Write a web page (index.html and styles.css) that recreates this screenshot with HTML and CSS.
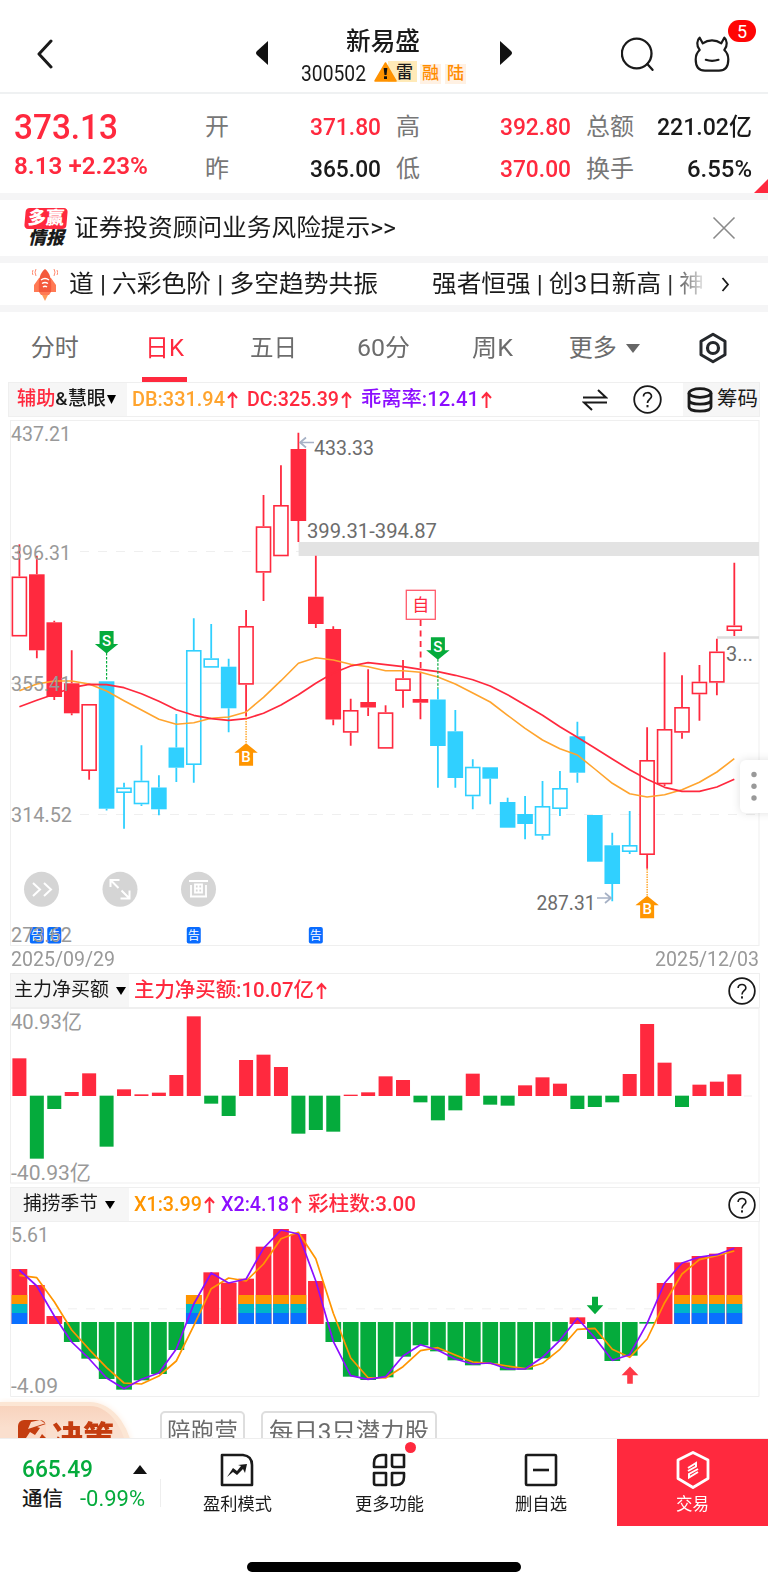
FILE: index.html
```html
<!DOCTYPE html>
<html lang="zh-CN">
<head>
<meta charset="utf-8">
<title>新易盛 300502</title>
<link rel="stylesheet" href="styles.css">
</head>
<body>
<header class="topbar">
  <div class="topbar-side">
    <svg class="back" width="20" height="32" viewBox="0 0 20 32"><path d="M17 4 5 17 17 30" fill="none" stroke="#1a1a1a" stroke-width="3" stroke-linecap="round" stroke-linejoin="round"/></svg>
  </div>
  <svg class="tri" width="12" height="24" viewBox="0 0 12 24"><path d="M12 0V24L1 14Q-1 12 1 10Z" fill="#111"/></svg>
  <div class="title">
    <h1><span data-w="74">新易盛</span></h1>
    <div class="code-row">
      <span class="code" data-w="65">300502</span>
      <span class="tag-risk"><svg width="23" height="20" viewBox="0 0 23 20"><path d="M11.5 1 22 19H1Z" fill="#ff9200" stroke="#ff9200" stroke-width="1.5" stroke-linejoin="round"/><path d="M9.6 6h3.8l-.9 7h-2z" fill="#111"/><rect x="10" y="14.3" width="3" height="2.7" fill="#111"/></svg><span>雷</span></span>
      <span class="tag">融</span><span class="tag">陆</span>
    </div>
  </div>
  <svg class="tri" width="12" height="24" viewBox="0 0 12 24"><path d="M0 0V24L11 14Q13 12 11 10Z" fill="#111"/></svg>
  <div class="topbar-actions">
    <svg width="36" height="36" viewBox="0 0 36 36" fill="none" stroke="#1a1a1a" stroke-width="2.300"><circle cx="15.700" cy="18.500" r="14.800"/><path d="m26.300 29 5.200 5.800" stroke-linecap="round"/></svg>
    <div class="bull">
      <svg width="36" height="38" viewBox="0 -2 36 38" fill="none" stroke="#1a1a1a" stroke-width="2.200" stroke-linecap="round" stroke-linejoin="round"><path d="M5.700 1.700C3 4 2 9.500 5.700 14 2.800 16.500 1.700 19 1.700 23.500 1.700 31 5 34.700 11 34.700H25C31 34.700 34.300 31 34.300 23.500 34.300 19 33.200 16.500 30.300 14 34 9.500 33 4 30.300 1.700L27.300 7.300Q23 4.300 18 4.300 13 4.300 8.700 7.300Z"/><path d="M11.800 23.800Q18 26 24.500 23.800"/></svg>
      <b class="badge">5</b>
    </div>
  </div>
</header>

<section class="quote">
  <div class="last">
    <div class="price"><span data-w="104">373.13</span></div>
    <div class="change"><span data-w="134">8.13 +2.23%</span></div>
  </div>
  <dl>
    <div><dt>开</dt><dd class="up"><span data-w="71">371.80</span></dd></div>
    <div><dt>高</dt><dd class="up"><span data-w="71">392.80</span></dd></div>
    <div><dt>总额</dt><dd><span data-w="95">221.02亿</span></dd></div>
    <div><dt>昨</dt><dd><span data-w="71">365.00</span></dd></div>
    <div><dt>低</dt><dd class="up"><span data-w="71">370.00</span></dd></div>
    <div><dt>换手</dt><dd><span data-w="65">6.55%</span></dd></div>
  </dl>
  <i class="corner"></i>
</section>

<section class="notice">
  <div class="notice-logo"><b>多赢</b><i>情报</i></div>
  <p><span data-w="322">证券投资顾问业务风险提示&gt;&gt;</span></p>
  <svg width="24" height="24" viewBox="0 0 24 24" stroke="#8a8a8a" stroke-width="1.6"><path d="m1.500 1.500 21 21m0-21-21 21"/></svg>
</section>

<section class="ticker">
  <svg class="rocket" width="26" height="33" viewBox="0 0 26 33"><path d="M9 25h8l-2 4-2 4-2-4z" fill="#ff9a5a"/><path d="M7 10 2 17v7h5l2 3h8l2-3h5v-7l-5-7z" fill="#ff7a55"/><path d="M13 1C8 5 6 11 7 24h12C20 11 18 5 13 1Z" fill="#f4593c"/><path d="M9 12q4-3 8 0M10 15.500q3-2 6 0M11 19q2-1.500 4 0" fill="none" stroke="#fff" stroke-width="1.500"/><path d="M4 1q-2 3 0 7M1 2q-1.500 3 0 5M22 1q2 3 0 7M25 2q1.500 3 0 5" fill="none" stroke="#ff8a70"/></svg>
  <p class="ticker-a"><span data-w="309">道 | 六彩色阶 | 多空趋势共振</span></p>
  <p class="ticker-b"><span data-w="272">强者恒强 | 创3日新高 | 神</span></p>
  <svg width="10" height="16" viewBox="0 0 10 16"><path d="m1.500 1 5.500 6.500-5.500 6.500" fill="none" stroke="#1a1a1a" stroke-width="1.800"/></svg>
</section>

<nav class="tabs">
  <a><span data-w="48">分时</span></a>
  <a class="active"><span data-w="39">日K</span></a>
  <a><span data-w="47">五日</span></a>
  <a><span data-w="53">60分</span></a>
  <a><span data-w="41">周K</span></a>
  <a class="more"><span data-w="48">更多</span><svg width="14" height="9" viewBox="0 0 14 9"><path d="M0 0H14L7 9Z" fill="#666"/></svg></a>
  <svg class="setting" width="30" height="32" viewBox="0 0 30 32" fill="none" stroke="#25282c"><path d="M15 2.300 27 9.200V22.800L15 29.700 3 22.800V9.200Z" stroke-width="3" stroke-linejoin="round"/><circle cx="15" cy="16" r="5.500" stroke-width="3.200"/></svg>
</nav>

<section class="panel main">
  <div class="panel-head wide">
    <div class="selector"><span data-w="89"><em>辅助</em>&amp;慧眼</span><svg width="9" height="9" viewBox="0 0 9 9"><path d="M0 0H9L4.500 9Z"/></svg></div>
    <div class="readout r-main"><span class="c-amber"><span data-w="93">DB:331.94</span></span><svg class="arr"><use href="#up"/></svg><span class="c-red"><span data-w="92">DC:325.39</span></span><svg class="arr"><use href="#up"/></svg><span class="c-purple"><span data-w="118">乖离率:12.41</span></span><svg class="arr"><use href="#up"/></svg></div>
    <svg class="swap" width="26" height="24" viewBox="0 0 26 24" fill="none" stroke="#1a1a1a" stroke-width="2"><path d="M1 9.500H24L16 2M25 14.500H2L10 22"/></svg>
    <svg class="help"><use href="#help"/></svg>
    <div class="chips-btn"><svg width="26" height="26" viewBox="0 0 26 26" fill="none" stroke="#1a1a1a" stroke-width="2.800"><ellipse cx="13" cy="6" rx="11" ry="4.300"/><path d="M2 6V20C2 25.500 24 25.500 24 20V6M2 13C2 18.500 24 18.500 24 13"/></svg><span data-w="41">筹码</span></div>
  </div>
  <svg class="chart" id="kline" width="768" height="527" viewBox="0 420 768 527">
    <rect x="10.500" y="420.500" width="748.500" height="525" fill="none" stroke="#efefef"/>
    <g stroke="#efefef"><path d="M80 551.500H759" stroke-dasharray="9 9"/><path d="M11 683.200H759" stroke-width="1.500"/><path d="M80 814.500H759" stroke-dasharray="9 9"/></g>
    <rect x="298.600" y="542" width="460.400" height="14" fill="#e3e3e3"/>
    <path d="M717 637.500H759" stroke="#ddd" stroke-width="2.500"/>
    <g id="candles"></g>
    <g id="averages"></g>
    <g class="note">
      <text x="314" y="454.700" textLength="60">433.33</text>
      <text x="307" y="537.500" textLength="130">399.31-394.87</text>
      <text x="536.500" y="910" textLength="59">287.31</text>
      <text x="726" y="661" textLength="27">3...</text>
    </g>
    <g fill="none" stroke="#a6b1c5" stroke-width="1.700"><path d="M314 442.500H300M306 437.500 300 442.500 306 447.500M597 898H611M605 893 611 898 605 903"/></g>
    <path d="M420.600 620V672" stroke="#ff293e" stroke-width="1.800" stroke-dasharray="6 4.500"/>
    <rect x="406.300" y="590.300" width="29" height="29" fill="#fff" stroke="#ff5a6a" stroke-width="1.300"/>
    <text class="self" x="412.300" y="611">自</text>
    <g id="signals"></g>
    <g id="notices"></g>
    <g class="axis">
      <text x="11" y="441" textLength="60">437.21</text>
      <text x="11" y="559.500" textLength="60">396.31</text>
      <text x="11" y="690.500" textLength="60">355.41</text>
      <text x="11" y="822" textLength="61">314.52</text>
      <text x="11" y="941.500" textLength="61">273.62</text>
    </g>
    <g fill="#d5d5d5"><circle cx="41.500" cy="889.300" r="17.500"/><circle cx="120" cy="889.300" r="17.500"/><circle cx="198.500" cy="889.300" r="17.500"/></g>
    <g fill="none" stroke="#fff" stroke-width="2">
      <path d="m33 883 7 6.500-7 6.500M44 883l7 6.500-7 6.500"/>
      <path d="M110.500 887V880H119.500M111 880.500 118.500 888M120.500 898.500H129.500V890.500M129 898 121.500 890.500"/>
      <path d="M189 881H208M191 885V897.500M206 885V897.500M190 896.500H207M195 884.500H202V892.500H195ZM198.500 884.500V892.500M195 888.500H202" stroke-width="1.800"/>
    </g>
    <g class="handle"><rect x="740" y="760" width="40" height="53" rx="6" fill="#fff"/><circle cx="754" cy="774.500" r="2.700"/><circle cx="754" cy="786.300" r="2.700"/><circle cx="754" cy="798" r="2.700"/></g>
  </svg>
  <div class="dates"><span data-w="104">2025/09/29</span><span data-w="104">2025/12/03</span></div>
</section>

<section class="panel">
  <div class="panel-head">
    <div class="selector"><span data-w="95">主力净买额</span><svg width="10" height="8" viewBox="0 0 10 8"><path d="M0 0H10L5 8Z"/></svg></div>
    <div class="readout"><span class="c-red"><span data-w="180">主力净买额:10.07亿</span></span><svg class="arr"><use href="#up"/></svg></div>
    <svg class="help"><use href="#help"/></svg>
  </div>
  <svg class="chart" width="768" height="176" viewBox="0 1008 768 176">
    <rect x="10.500" y="1008.500" width="748.500" height="174.500" fill="none" stroke="#efefef"/>
    <path d="M744 1096H752" stroke="#efefef"/>
    <g id="flow"></g>
    <g class="axis"><text x="11" y="1029" textLength="71">40.93亿</text><text x="11" y="1179.500" textLength="80">-40.93亿</text></g>
  </svg>
</section>

<section class="panel third">
  <div class="panel-head">
    <div class="selector narrow"><span data-w="75">捕捞季节</span><svg width="10" height="8" viewBox="0 0 10 8"><path d="M0 0H10L5 8Z"/></svg></div>
    <div class="readout r-third"><span class="c-orange"><span data-w="68">X1:3.99</span></span><svg class="arr"><use href="#up"/></svg><span class="c-purple"><span data-w="68">X2:4.18</span></span><svg class="arr"><use href="#up"/></svg><span class="c-red"><span data-w="108">彩柱数:3.00</span></span></div>
    <svg class="help"><use href="#help"/></svg>
  </div>
  <svg class="chart" width="768" height="176" viewBox="0 1222 768 176">
    <path d="M10.500 1222V1396.500H759V1222" fill="none" stroke="#efefef"/>
    <path d="M14 1308.800H752" stroke="#efefef" stroke-dasharray="9 9"/>
    <g id="season"></g>
    <path d="M592 1296.700h6v8.500h5.300l-8.300 9-8.300-9h5.300z" fill="#05ab3c"/>
    <path d="M627.200 1383.700h5.600v-8.500h5.600l-8.400-8.700-8.400 8.700h5.600z" fill="#ff3947"/>
    <g class="axis"><text x="11" y="1242" textLength="38">5.61</text><text x="11" y="1393" textLength="47">-4.09</text></g>
  </svg>
</section>

<section class="promo">
  <div class="decision"><svg width="28" height="28" viewBox="0 0 28 28"><rect width="28" height="28" rx="6" fill="#c43d10"/><path d="M10 9 13 2 22 0 28 4 19 7 22 8 17 15 12 12 4 24 9 26 13 20 18 24 24 14 28 18V3Z" fill="#fbd9c6"/></svg><b><span data-w="62">决策</span></b></div>
  <span class="chip"><span data-w="71">陪跑营</span></span>
  <span class="chip"><span data-w="160">每日3只潜力股</span></span>
</section>

<footer class="bottom">
  <div class="index">
    <div class="index-row"><span class="idx-val"><span data-w="71">665.49</span></span><svg width="14" height="9" viewBox="0 0 14 9"><path d="M7 0 14 9H0Z" fill="#111"/></svg></div>
    <div class="index-row"><span class="idx-name"><span data-w="41">通信</span></span><span class="idx-pct"><span data-w="65">-0.99%</span></span></div>
  </div>
  <a><svg width="34" height="34" viewBox="0 0 34 34" fill="none" stroke="#1a1a1a" stroke-width="2.600"><path d="M2 2H23Q32 3 32 12V32H2Z" stroke-linejoin="round"/><path d="M7 24 13 15 17 18 21 13 18 12 27 11 25 20 23 16 17 22 13 19Z" fill="#1a1a1a" stroke="none"/></svg><span data-w="69">盈利模式</span></a>
  <a><svg width="34" height="34" viewBox="0 0 34 34" fill="none" stroke="#1a1a1a" stroke-width="2.600" stroke-linejoin="round"><path d="M10 2H14V14H2V10Q2 2 10 2ZM20 2H32V14H22Q20 14 20 12ZM2 20H14V32H4Q2 32 2 30ZM20 20H32V24Q32 32 24 32H20Z"/></svg><i class="dot"></i><span data-w="69">更多功能</span></a>
  <a><svg width="34" height="34" viewBox="0 0 34 34" fill="none" stroke="#1a1a1a" stroke-width="2.600"><rect x="2" y="2" width="30" height="30" rx="1"/><path d="M9 17H25"/></svg><span data-w="52">删自选</span></a>
  <a class="trade"><svg width="36" height="40" viewBox="0 0 36 40" fill="none" stroke="#fff"><path d="M18 2.500 33 10V28.500L18 37.500 3 28.500V10Z" stroke-width="2.800" stroke-linejoin="round"/><path d="M13 18 21 13V16.500L13 21M23 19 14 24V27.500L23 22" stroke-width="2"/></svg><span data-w="33">交易</span></a>
</footer>
<div class="home"><i></i></div>

<svg class="defs" width="0" height="0">
  <symbol id="up" viewBox="0 0 11 18"><path d="M5.500 17V2M1 7 5.500 2 10 7" fill="none" stroke="#ff293e" stroke-width="2"/></symbol>
  <symbol id="help" viewBox="0 0 29 29"><circle cx="14.500" cy="14.500" r="13.300" fill="none" stroke="#1a1a1a" stroke-width="1.800"/><path d="M10.500 11.500C10.500 6.500 18.500 6.500 18.500 11.300 18.500 14 14.500 14.500 14.500 18" fill="none" stroke="#1a1a1a" stroke-width="1.700"/><rect x="13.500" y="20" width="2" height="2.300" fill="#1a1a1a"/></symbol>
</svg>
<script src="charts.js"></script>
</body>
</html>
```
FILE: styles.css
```css
* { box-sizing: border-box; }
body {
  margin: 0; width: 768px; height: 1586px; overflow: hidden;
  background: #fff; color: #1a1a1a; line-height: 1.2;
  font-family: Roboto, "Noto Sans CJK SC", sans-serif;
}
h1, p, dl, dd { margin: 0; font-weight: inherit; }
svg { display: block; flex: none; }
a { color: inherit; text-decoration: none; }
em { font-style: normal; }
.defs { position: absolute; }
[data-w] { display: inline-block; white-space: nowrap; flex: none; transform-origin: 0 50%; vertical-align: top; }

.topbar { height: 94px; padding-top: 14px; border-bottom: 2px solid #eff1f2; display: flex; align-items: center; }
.topbar-side { width: 256px; padding-left: 34px; }
.title { width: 232px; height: 60px; margin-top: 8px; display: flex; flex-direction: column; align-items: center; }
h1 { font-size: 25px; line-height: 30px; font-weight: 500; height: 30px; margin-left: -2px; }
.code-row { display: flex; align-items: center; height: 28px; margin: 3px 0 0 3px; }
.code { font-size: 21.500px; line-height: 26px; }
.tag-risk { display: flex; align-items: center; width: 43px; height: 21px; margin: -4px 3px 0 8px; font-size: 17px; line-height: 20px; font-weight: 500; background: linear-gradient(90deg, transparent 14px, #ffeab8 14px); }
.tag-risk span { margin-left: -1px; }
.tag { width: 21px; height: 20px; margin-right: 4px; line-height: 19px; font-size: 17px; text-align: center; font-weight: 500; color: #ff8c00; background: #fff1e3; }
.topbar-actions { margin-left: 109px; display: flex; align-items: center; gap: 37px; }
.bull { position: relative; }
.badge { position: absolute; left: 34px; top: -14px; width: 28px; height: 22px; border-radius: 11px; background: #ff0505; color: #fff; font-size: 18px; line-height: 23px; text-align: center; font-weight: 400; }

.quote { position: relative; height: 99px; display: flex; padding-left: 14px; }
.last { width: 191px; color: #ff293e; }
.price { font-size: 35px; line-height: 40px; height: 40px; font-weight: 500; margin-top: 14px; }
.change { font-size: 24px; line-height: 30px; font-weight: 600; margin-top: 3px; }
dl { display: grid; grid-template-columns: 176px 175px 166px; column-gap: 15px; grid-template-rows: 42px 42px; padding-top: 12px; }
dl > div { display: flex; justify-content: space-between; align-items: center; font-size: 24px; }
dt { color: #777; }
dd { font-weight: 500; }
.up { color: #ff293e; }
.corner { position: absolute; right: 0; bottom: 0; border-style: solid; border-width: 0 0 14px 14px; border-color: transparent transparent #ff293e; }

.notice { height: 70px; border: solid #f5f5f6; border-width: 7px 0; padding: 0 32px 0 25px; display: flex; align-items: center; font-size: 24px; }
.notice p { flex: 1; margin-left: 7px; }
.notice-logo { width: 42px; height: 40px; font-size: 18px; text-align: center; font-weight: 900; }
.notice-logo b { display: block; height: 21px; line-height: 20px; border-radius: 4px; background: #ff293e; color: #fff; transform: skewX(-5deg); font-weight: 900; }
.notice-logo i { display: block; line-height: 18px; }

.ticker { height: 49px; border-bottom: 7px solid #f5f5f6; display: flex; align-items: center; font-size: 24px; padding: 1px 0 0 32px; }
.ticker-a { margin-left: 11px; width: 363px; }
.ticker-b { width: 289px; -webkit-mask-image: linear-gradient(90deg, #000 235px, transparent 276px); mask-image: linear-gradient(90deg, #000 235px, transparent 276px); }

.tabs { height: 70px; padding: 4px 40px 0 0; display: flex; align-items: center; font-size: 24px; color: #6c6c6c; }
.tabs a { width: 109.500px; height: 66px; padding-bottom: 2px; display: flex; align-items: center; justify-content: center; }
.tabs .active { color: #ff293e; background: linear-gradient(#ff293e, #ff293e) 50% 100% / 45px 5px no-repeat; }
.tabs .more { gap: 9px; padding-left: 4px; }
.setting { margin: -2px 0 0 41px; }

.panel-head { height: 35px; margin: 0 8.500px 0 10px; border: 1px solid #efefef; display: flex; align-items: center; font-size: 19px; }
.panel-head.wide { margin: 0 8px 3px; }
.selector { width: 118px; height: 33px; padding-left: 3px; background: #f6f6f6; display: flex; align-items: center; gap: 7px; font-weight: 400; }
.narrow { padding-left: 12px; }
.wide .selector { font-weight: 500; gap: 1px; padding-left: 8px; }
.selector em, .c-red { color: #ff293e; }
.c-amber { color: #ffa42e; }
.c-orange { color: #ff9500; }
.c-purple { color: #8c0eff; }
.readout { display: flex; align-items: center; padding-left: 5px; font-size: 20.500px; font-weight: 500; flex: 1; }
.readout .arr { width: 11px; height: 18px; margin: 0 9px 0 2px; }
.r-third .arr { margin-right: 6px; }
.help { width: 28px; height: 28px; margin-right: 3px; }
.wide .help { width: 29px; height: 29px; margin: 0 21px 0 25px; }
.wide .swap { margin-left: 0; }
.chips-btn { display: flex; align-items: center; gap: 4px; width: 76px; height: 33px; padding-left: 4px; background: #f6f6f6; font-size: 20.500px; }
.chart { display: block; }
.main .chart { margin-bottom: -2px; }
.chart text { font-size: 21px; }
.axis { fill: #999; }
.note { fill: #6c6c6c; }
.chart .self { font-size: 17px; fill: #ff293e; }
.chart .signal { font-size: 15px; fill: #fff; font-weight: 500; text-anchor: middle; }
.chart .bulletin { font-size: 12px; fill: #fff; text-anchor: middle; }
.handle { fill: #999; }
.handle rect { filter: drop-shadow(0 0 4px rgba(0, 0, 0, .12)); }
.dates { height: 28px; padding: 2px 9.500px 0 11px; display: flex; justify-content: space-between; align-items: center; font-size: 21px; color: #999; }
.third { margin-top: 3px; }

.promo { height: 41px; overflow: hidden; display: flex; align-items: flex-start; }
.decision { width: 134px; height: 70px; margin: 4px 26px 0 0; padding: 14px 0 0 18px; display: flex; gap: 6px; color: #c43d10; font-size: 30px; line-height: 34px; border: solid #fce6d4; border-width: 4px 6px 0 0; border-radius: 0 44px 0 0 / 0 62px 0 0; background: linear-gradient(#f8d3bd, #fadfce 22px); box-shadow: 0 0 6px #fdeee2; }
.decision b { font-weight: 900; }
.chip { height: 50px; margin: 13px 16px 0 0; padding: 0 6px 0 6px; border: 2px solid #dedede; border-radius: 5px; font-size: 24px; line-height: 38px; color: #6c6c6c; }
.chip:nth-child(2) { width: 85px; padding-left: 5px; }

.bottom { height: 87px; display: flex; box-shadow: 0 -1px #eee; position: relative; background: #fff; }
.index { width: 161px; padding: 12px 14px 0 22px; background: linear-gradient(#eee, #eee) 100% 40px / 1px 28px no-repeat; }
.index-row { display: flex; justify-content: space-between; align-items: center; height: 36px; }
.index-row:nth-child(2) { height: 24px; padding-right: 2px; }
.idx-val { font-size: 24px; color: #05ab3c; font-weight: 500; }
.idx-name { font-size: 20.500px; font-weight: 500; }
.idx-pct { font-size: 22px; color: #05ab3c; }
.bottom a { position: relative; width: 152px; padding-top: 14px; display: flex; flex-direction: column; align-items: center; font-size: 17.500px; line-height: 24px; }
.bottom a > span { margin-top: 5px; }
.dot { position: absolute; left: 92px; top: 3px; width: 11px; height: 11px; border-radius: 50%; background: #ff293e; }
.bottom .trade { width: auto; flex: 1; background: #ff293e; color: #fff; padding-top: 11px; }
.trade > svg { margin-bottom: -3px; }
.home { padding-top: 36px; }
.home i { display: block; width: 274px; height: 10px; margin: 0 auto; border-radius: 5px; background: #000; }
```
FILE: charts.js
```js
// Condense each label to the width given in data-w, keeping it in flow.
document.querySelectorAll('[data-w]').forEach(function (el) {
  var natural = el.getBoundingClientRect().width;
  var wanted = +el.dataset.w;
  el.style.transform = 'scaleX(' + wanted / natural + ')';
  el.style.marginRight = wanted - natural + 'px';
});
document.querySelectorAll('text[textLength]').forEach(function (t) {
  t.setAttribute('lengthAdjust', 'spacingAndGlyphs');
});

var RED = '#ff293e', BLUE = '#30d0ff', GREEN = '#05ab3c';
function x(i) { return 19.4 + 17.437 * i; }
function put(id, html) { document.getElementById(id).innerHTML = html; }
function line(values, color, width) {
  return '<polyline fill="none" stroke="' + color + '" stroke-width="' + width + '" stroke-linejoin="round" points="' +
    values.map(function (v, i) { return x(i).toFixed(1) + ',' + v; }).join(' ') + '"/>';
}

// [high, body top, body bottom, low, style]; R/B solid, r/b hollow
var K = [
  [544.3,576.5,636.5,636.5,'r'],[555.7,574.3,650.3,658.3,'R'],[620.7,622.3,697,700,'R'],[650.3,683.3,713.3,715.3,'R'],
  [704,704,771,779.7,'r'],[681.3,681.3,808.7,810.5,'B'],[782.7,787.5,793,828.7,'b'],[745.3,780.7,804.3,806,'b'],
  [775.3,787.5,809.3,815.3,'B'],[714,747.5,767.7,782,'B'],[618.3,650,765,782.7,'b'],[624,658.3,667.7,667.7,'b'],
  [658.7,666.7,708.3,732.3,'B'],[610,626,684.7,716,'r'],[495,526.3,572.7,601,'r'],[465.3,505,556.3,556.3,'r'],
  [432.7,449,521,542,'R'],[555.7,596.7,624,628,'R'],[626.3,629,719.5,725.3,'R'],[698.7,710,732.7,745.7,'r'],
  [669.3,702,707.5,716,'R'],[705.3,712.3,748.7,748.7,'r'],[660,678.3,691,707.7,'r'],[671.7,699,702.7,719.3,'R'],
  [688.7,699.5,746,787.7,'B'],[710,731.3,778,787.7,'B'],[759.3,766.7,796.3,809.3,'b'],[767.3,767.3,778.7,804.3,'B'],
  [797.7,802,827.7,827.7,'B'],[796,814,824,839.3,'B'],[781,806,835.7,839.7,'b'],[771,788,809,816,'b'],
  [721.7,736.3,772.7,782.7,'B'],[815,815,861.7,861.7,'B'],[832.7,845.3,884,901.3,'B'],[811,845,852,854,'b'],
  [727.3,760,855,868.7,'r'],[652.3,729,784.3,786,'r'],[675.3,707,732.7,738.7,'r'],[665,681.7,694.3,720.7,'r'],
  [638.7,651.5,682.7,695.3,'r'],[562.7,625.5,631,636,'r']
];
put('candles', K.map(function (k, i) {
  var c = /r/i.test(k[4]) ? RED : BLUE, solid = /[RB]/.test(k[4]), p = solid ? 0 : .8;
  return '<path d="M' + x(i) + ' ' + k[0] + 'V' + k[1] + 'M' + x(i) + ' ' + k[2] + 'V' + k[3] + '" stroke="' + c + '" stroke-width="1.8"/>' +
    '<rect x="' + (x(i) - 7.8 + p) + '" y="' + (k[1] + p) + '" width="' + (15.6 - 2 * p) + '" height="' + (k[2] - k[1] - 2 * p) +
    '" ' + (solid ? 'fill="' + c + '"' : 'fill="#fff" stroke="' + c + '" stroke-width="1.6"') + '/>';
}).join(''));

var DB = [690.7,684,681,681,684,691,700.7,710,719.3,724.3,722.7,718.3,717,712,697.3,680.7,663.3,657.7,660,664.3,666.7,670.7,670.7,672.3,677,684,693,702,715.3,728.3,740,748.7,755,769,783.3,793.7,797,794.7,789.7,782.3,772,758.7];
var DC = [706.7,700.3,694.3,687.7,684.3,684.7,687.7,693.7,701.3,709.7,715.3,718.7,720.3,718.7,713.3,705,694.7,683.3,673,666,662.7,664.7,666.7,669.3,671.7,675.3,679.7,686,694.7,705,715.3,726.7,737.3,748,759,769.7,779.3,787.3,791.3,791.3,787,779.3];
put('averages', line(DB, '#ffa42e', 1.6) + line(DC, RED, 1.7));

function sell(i, y, end) {
  var c = x(i);
  return '<path d="M' + c + ' ' + (y + 22) + 'V' + end + '" stroke="' + GREEN + '" stroke-width="1.2" stroke-dasharray="2.5 1.5"/>' +
    '<path d="M' + (c - 7) + ' ' + y + 'h14v13h4.700l-11.700 9.500-11.700-9.500h4.700z" fill="' + GREEN + '"/><text class="signal" x="' + c + '" y="' + (y + 14.500) + '">S</text>';
}
function buy(i, y, start) {
  var c = x(i);
  return '<path d="M' + c + ' ' + start + 'V' + y + '" stroke="#ff9500" stroke-width="1.2" stroke-dasharray="1.5 1"/>' +
    '<path d="M' + c + ' ' + y + 'l11.700 9.500h-4.700v13h-14v-13h-4.700z" fill="#ff9500"/><text class="signal" x="' + c + '" y="' + (y + 18.500) + '">B</text>';
}
put('signals', sell(5, 631, 681) + sell(24, 637.300, 688.700) + buy(13, 743.300, 716) + buy(36, 895.700, 869));
put('notices', [1, 2, 10, 17].map(function (i) {
  return '<rect x="' + (x(i) - 7) + '" y="927" width="14" height="16.500" rx="2" fill="#0a6cff"/><text class="bulletin" x="' + x(i) + '" y="939.500">告</text>';
}).join(''));

// Bar ends in thirds of a pixel below y = 960; the zero line sits at 407.
var FLOW = [295,596,447,396,340,560,388,403,398,345,169,431,468,300,284,321,521,510,515,404,397,349,360,427,481,451,341,434,437,376,352,371,447,441,427,342,192,308,441,374,365,343];
put('flow', FLOW.map(function (v, i) {
  var a = Math.min(v, 407), b = Math.max(v, 408);
  return '<rect x="' + (x(i) - 7) + '" y="' + (960 + a / 3) + '" width="14" height="' + (b - a) / 3 + '" fill="' + (v < 407 ? RED : GREEN) + '"/>';
}).join(''));

// Same scale measured below y = 1180; negative entries carry the striped base.
var BARS = [-267,315,408,486,536,597,629,601,582,510,-345,277,308,-296,-200,-147,-162,303,486,590,600,592,530,496,514,541,556,551,571,569,535,484,412,477,543,527,431,309,-247,-228,-221,-201];
function seg(i, a, b, c) {
  return '<rect x="' + (x(i) - 7.800) + '" y="' + (1180 + a / 3) + '" width="15.700" height="' + (b - a) / 3 + '" fill="' + c + '"/>';
}
var X2 = [270,318,408,486,536,594,626,598,579,507,372,279,309,297,205,150,162,303,484,587,598,590,528,494,511,537,552,549,567,567,532,481,415,473,541,524,430,309,249,231,224,205];
var X1 = [286,293,365,450,508,563,609,612,588,543,437,326,294,303,252,176,157,236,400,534,593,594,560,512,503,525,546,550,558,566,550,508,448,445,508,532,477,368,282,239,227,213];
function scale(v) { return (1180 + v / 3).toFixed(1); }
put('season', BARS.map(function (v, i) {
  var y = Math.abs(v);
  if (y > 425) return seg(i, 426, y, GREEN);
  return seg(i, y, 432, RED) + (v < 0 ? seg(i, 345, 372, '#ff9500') + seg(i, 372, 399, '#00b6c8') + seg(i, 399, 432, '#0a70ff') : '');
}).join('') + line(X1.map(scale), '#ff9500', 1.7) + line(X2.map(scale), '#8c0eff', 1.7));
```
